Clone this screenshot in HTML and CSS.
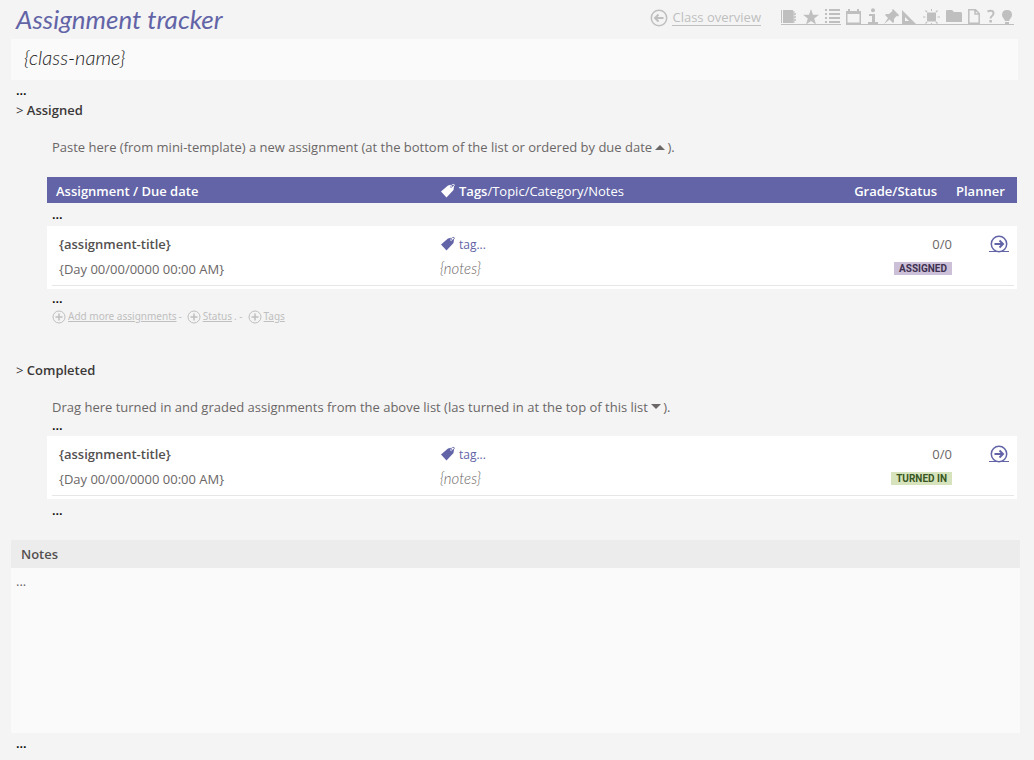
FILE: index.html
```html
<!DOCTYPE html>
<html lang="en">
<head>
<meta charset="utf-8">
<title>Assignment tracker</title>
<link rel="stylesheet" href="styles.css">
</head>
<body>
<svg class="sprite" aria-hidden="true">
  <symbol id="arrow" viewBox="0 0 18 18"><circle cx="9" cy="9" r="7.7" fill="none" stroke="currentColor" stroke-width="1.5"/><path d="M4.500 9H13M9.500 5.500 13 9l-3.500 3.500" fill="none" stroke="currentColor" stroke-width="2"/></symbol>
  <symbol id="back" viewBox="0 0 18 18"><circle cx="9" cy="9" r="7.700" fill="none" stroke="currentColor" stroke-width="1.500"/><path d="M13.500 9H5M8.500 5.500 5 9l3.500 3.500" fill="none" stroke="currentColor" stroke-width="2"/></symbol>
  <symbol id="plus" viewBox="0 0 14 14"><circle cx="7" cy="7" r="6" fill="none" stroke="currentColor"/><path d="M7 3.500v7M3.500 7h7" stroke="currentColor" stroke-width="1.500"/></symbol>
  <symbol id="tag" viewBox="0 0 16 16"><path d="M1 8.500 8 2.500 11 1.800 10.300 4.300l1 1 2-2.300.7.500L13.500 7 6.500 14.500Z" fill="currentColor"/><path d="M11.500 4.500Q10.500 2 12.500 1.500T14.500 2 12 4.800" fill="none" stroke="currentColor" stroke-width=".8"/></symbol>
</svg>
<header class="top">
  <h1 class="title">Assignment tracker</h1>
  <nav class="nav">
    <a class="back" href="#"><svg class="round"><use href="#back"/></svg><span class="link-text">Class overview</span></a>
    <div class="tools">
      <a href="#" aria-label="Book"><svg class="i16" viewBox="0 0 16 16"><path d="M0 1h1v13H0zM2 1h10v13H2z"/><path d="M12 2h1.500v2H15v2h-1.500v1H15v2h-1.500v1H15v2h-1.500v2H12z" opacity=".8"/></svg></a>
      <a href="#" aria-label="Star"><svg class="i16" viewBox="0 0 16 16"><path d="m8 0 2 5.700 6 .1-4.800 3.700L13 15.500l-5-3.600-5 3.600 1.800-6L0 5.800l6-.1z"/></svg></a>
      <a href="#" aria-label="List"><svg class="i16" viewBox="0 0 16 16"><path d="M0 0h2v2H0zM4 0h11v2H4zM0 4h2v2H0zM4 4h11v2H4zM0 8h2v2H0zM4 8h11v2H4zM0 12h2v2H0zM4 12h11v2H4z"/></svg></a>
    </div>
    <div class="tools">
      <a href="#" aria-label="Calendar"><svg class="i16" viewBox="0 0 16 16"><path d="M0 2h2V0h2v2h7V0h2v2h2v13H0zM1.500 5v8.500h12V5z" fill-rule="evenodd"/></svg></a>
      <a href="#" aria-label="Information"><svg class="i10" viewBox="0 0 10 16"><circle cx="5" cy="1.200" r="2"/><path d="M1 5h6v8h3v2H0v-2h4V7H1z"/></svg></a>
      <div class="pair">
        <a href="#" aria-label="Pin"><svg class="i16" viewBox="0 0 16 16"><path d="m9 0 6 6-1 1.500-1.500-.5L10 10v3l-1 1-3.500-3.500L0 15l4-6L1 6l1-1h3l3.500-3-.5-1z"/></svg></a>
        <a href="#" aria-label="Set square"><svg class="i16" viewBox="0 0 16 16"><path d="M1 1v14h14zM4 8v4h4z" fill-rule="evenodd"/></svg></a>
      </div>
      <a href="#" aria-label="Sun"><svg class="i17" viewBox="0 0 17 16"><path d="M4 3.500h9v9H4zM8 0h1v2H8zM8 14h1v2H8zM0 7.500h2.500v1H0zM14.500 7.500H17v1h-2.500z"/><path d="m2.500 1.500 1.500 1.500M14.500 1.500 13 3M2.500 14.500 4 13M14.500 14.500 13 13" stroke="currentColor" stroke-width="1.200"/></svg></a>
      <a href="#" aria-label="Folder"><svg class="i16" viewBox="0 0 16 16"><path d="M0 2q0-1 1-1h5l2 2h6q2 0 2 1v9H0z"/></svg></a>
      <a href="#" aria-label="Page"><svg class="i12" viewBox="0 0 12 16"><path d="M.8.800h6.700L11.200 4.500v9.700H.8zM7 .8v4.200h4" fill="none" stroke="currentColor" stroke-width="1.500"/></svg></a>
      <a href="#" aria-label="Help"><svg class="i10" viewBox="0 0 10 16"><path d="M1.500 2.500Q3 1.800 4.500 1.800 7.500 1.800 7.500 4.200 7.500 6 6 7T4.600 9.500" fill="none" stroke="currentColor" stroke-width="2"/><path d="M3.400 11h2.500v2.500H3.400z"/></svg></a>
      <a href="#" aria-label="Tip"><svg class="i12" viewBox="0 0 12 16"><path d="M5 1q5 0 5 5 0 2-2 4L7 12H3L2 10Q0 8 0 6q0-5 5-5M3 13h4v2H3z"/></svg></a>
    </div>
  </nav>
</header>

<main>
  <p class="class-name">{class-name}</p>
  <p class="dots">...</p>

  <section class="assigned">
    <h2 class="heading"><span class="mark">&gt;</span> Assigned</h2>
    <p class="hint">Paste here (from mini-template) a new assignment (at the bottom of the list or ordered by due date <svg class="caret" viewBox="0 0 10 6"><path d="M0 6 5 1l5 5z"/></svg>).</p>
    <table class="list">
      <colgroup><col class="c-title"><col><col class="c-grade"><col class="c-plan"></colgroup>
      <thead>
        <tr><th scope="col">Assignment / Due date</th><th scope="col"><svg class="tag"><use href="#tag"/></svg>Tags<span class="regular">/Topic/Category/Notes</span></th><th scope="col">Grade/Status</th><th scope="col">Planner</th></tr>
      </thead>
      <tbody>
        <tr class="gap"><td colspan="4">...</td></tr>
        <tr class="item">
          <td><div class="name">{assignment-title}</div><div class="due">{Day 00/00/0000 00:00 AM}</div></td>
          <td><div class="tags"><svg class="tag"><use href="#tag"/></svg>tag...</div><div class="memo">{notes}</div></td>
          <td><div class="score">0/0</div><div class="state"><span class="badge">ASSIGNED</span></div></td>
          <td><a class="go" href="#" aria-label="Open in planner"><svg class="round"><use href="#arrow"/></svg></a></td>
        </tr>
        <tr class="gap gap-tight"><td colspan="4">...</td></tr>
      </tbody>
    </table>
    <div class="adds">
      <svg class="plus"><use href="#plus"/></svg><a href="#">Add more assignments</a><span class="dash">-</span>
      <svg class="plus"><use href="#plus"/></svg><a href="#">Status</a><span class="dash">. -</span>
      <svg class="plus"><use href="#plus"/></svg><a href="#">Tags</a>
    </div>
  </section>

  <section class="completed">
    <h2 class="heading"><span class="mark">&gt;</span> Completed</h2>
    <p class="hint hint-close">Drag here turned in and graded assignments from the above list (las turned in at the top of this list <svg class="caret" viewBox="0 0 10 6"><path d="m0 0 5 5 5-5z"/></svg>).</p>
    <table class="list" aria-label="Completed assignments">
      <colgroup><col class="c-title"><col><col class="c-grade"><col class="c-plan"></colgroup>
      <tbody>
        <tr class="gap gap-tight"><td colspan="4">...</td></tr>
        <tr class="item">
          <td><div class="name">{assignment-title}</div><div class="due">{Day 00/00/0000 00:00 AM}</div></td>
          <td><div class="tags"><svg class="tag"><use href="#tag"/></svg>tag...</div><div class="memo">{notes}</div></td>
          <td><div class="score">0/0</div><div class="state"><span class="badge badge-done">TURNED IN</span></div></td>
          <td><a class="go" href="#" aria-label="Open in planner"><svg class="round"><use href="#arrow"/></svg></a></td>
        </tr>
        <tr class="gap"><td colspan="4">...</td></tr>
      </tbody>
    </table>
  </section>

  <section class="notes">
    <h2 class="notes-title">Notes</h2>
    <div class="notes-body">...</div>
  </section>
  <p class="dots">...</p>
</main>
</body>
</html>
```
FILE: styles.css
```css
* { box-sizing: border-box; }
body {
  margin: 0;
  padding: 0 16px 0 11px;
  background: #f4f4f4;
  color: #6b6767;
  font: 13px/18px "Open Sans", "Noto Sans", sans-serif;
}
h1, h2, p { margin: 0; }
svg { fill: currentColor; flex: none; }
.sprite { position: absolute; width: 0; height: 0; }
a { color: inherit; }

.top { display: flex; justify-content: space-between; height: 39px; padding: 0 4px 0 5px; }
.title {
  color: #6264a7;
  font: italic 400 26px/39px "Segoe Print", "Ink Free", Lato, cursive;
}
.nav { display: flex; align-items: flex-start; gap: 5px; color: #bfbfbf; }
.back { display: flex; align-items: flex-start; gap: 4px; margin: 9px 15px 0 0; text-decoration: none; }
.round { display: block; width: 18px; height: 18px; }
.link-text { border-bottom: 1px solid; line-height: 16px; }
.tools { display: flex; gap: 6px; height: 25px; padding-top: 9px; border-bottom: 1px solid; }
.pair { display: flex; gap: 1px; }
.tools svg { display: block; height: 16px; overflow: visible; }
.i10 { width: 10px; }
.i12 { width: 12px; }
.i16 { width: 16px; }
.i17 { width: 17px; }

.class-name {
  padding: 0 13px 4px;
  background: #fafafa;
  color: #222;
  font: italic 300 20px/37px "Segoe Print", "Ink Free", Lato, cursive;
}
.dots { padding: 1px 5px; color: #000; font-weight: 600; }
.heading { padding: 0 5px; color: #3b3838; font-size: 13px; font-weight: 600; line-height: 20px; }
.mark { font-weight: 400; }
.hint { padding: 18px 41px 21px; }
.hint-close { padding-bottom: 0; }
.caret { width: 10px; height: 6px; margin: 0 2px 2px 0; }

.list { width: calc(100% - 37px); margin-left: 36px; border-collapse: collapse; table-layout: fixed; }
.c-title { width: 40%; }
.c-grade { width: 120px; }
.c-plan { width: 65px; }
.list th { height: 26px; padding: 2px 9px 0; background: #6264a7; color: #fff; font-weight: 600; text-align: left; white-space: nowrap; }
.list th:nth-child(2), .list td:nth-child(2) { padding-left: 5px; }
.list th:nth-child(3) { padding-right: 15px; text-align: right; }
.list th:nth-child(4) { padding-left: 4px; }
.regular { font-weight: 400; }
.tag { width: 16px; height: 16px; margin-right: 3px; vertical-align: -3px; }
.list .gap td { height: 23px; padding: 0 5px 2px; color: #000; font-weight: 600; line-height: 18px; }
.list .gap-tight td { height: 20px; }
.item {
  height: 63px;
  background: #fff linear-gradient(#e7e6e6, #e7e6e6) 5px 59px / calc(100% - 8px) 1px no-repeat;
}
.item td { padding: 6px 0 0 12px; vertical-align: top; line-height: 25px; }
.item td:nth-child(3) { text-align: right; }
.item td:nth-child(4) { padding: 9px 8px 0 0; }
.name { color: #545050; font-weight: 600; }
.tags { color: #6264a7; font-size: 12px; }
.memo { font: italic 300 15px/23px Lato, cursive; }
.state { line-height: 20px; }
.badge { display: inline-block; padding: 0 5px; background: #ccc0d9; color: #3f3151; font: 700 10px/13px Roboto, sans-serif; vertical-align: middle; }
.badge-done { background: #d7e3bc; color: #375623; }
.go { display: block; width: 20px; margin-left: auto; border-bottom: 1px solid; color: #6264a7; }
.go .round { margin: 0 auto -2px; }

.adds { display: flex; align-items: center; gap: 2px; padding-left: 41px; color: #bfbfbf; font: 10px/15px "Noto Sans", sans-serif; }
.plus { width: 14px; height: 14px; }
.dash { margin-right: 3px; }
.completed { padding-top: 36px; }

.notes { margin: 18px -2px 0 0; }
.notes-title { padding: 0 10px; background: #ececec; color: #545050; font-size: 13px; font-weight: 600; line-height: 28px; }
.notes-body { min-height: 165px; padding: 4px 5px; background: #fafafa; }
```
